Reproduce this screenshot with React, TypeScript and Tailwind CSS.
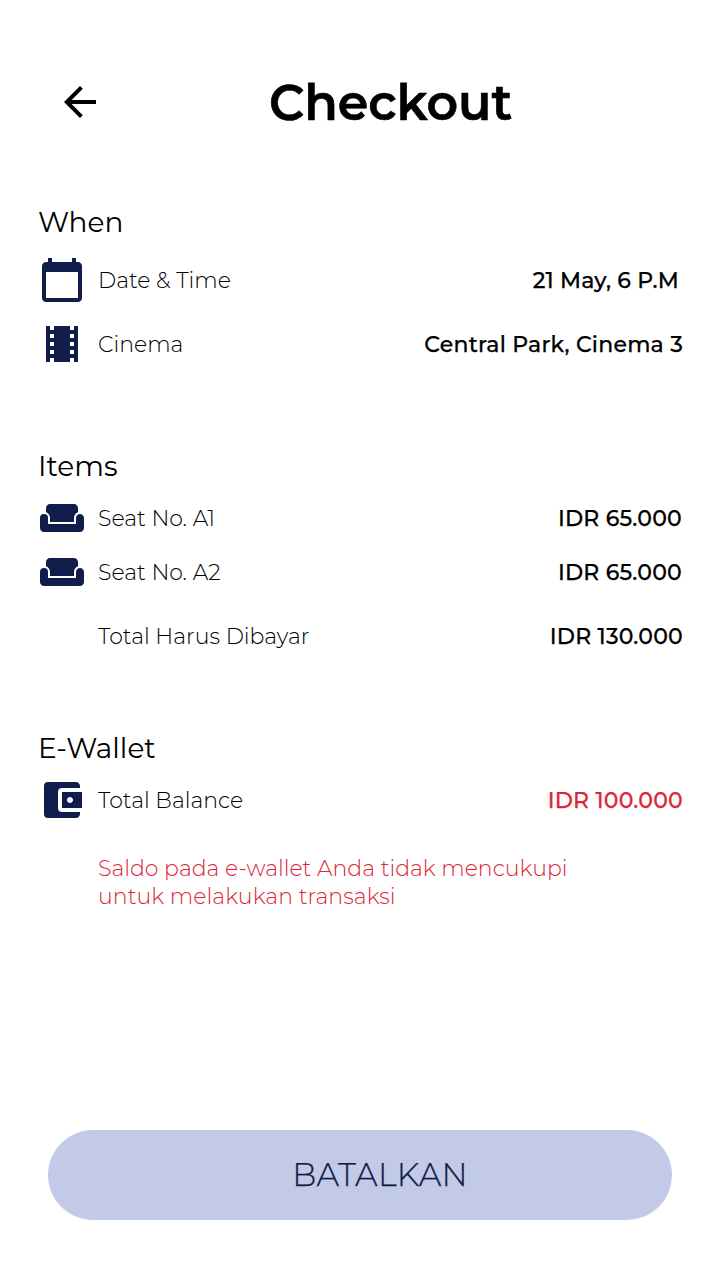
import type { ReactNode } from "react";
import {
  MdAccountBalanceWallet,
  MdArrowBack,
  MdCalendarToday,
  MdTheaters,
  MdWeekend,
} from "react-icons/md";

type RowProps = {
  icon?: ReactNode;
  label: string;
  value: string;
  valueClass?: string;
};

function Row({ icon, label, value, valueClass = "mr-[37px] tracking-[0.22px]" }: RowProps) {
  return (
    <div className="flex h-12 items-center pl-[38px] text-[22px] leading-7">
      <span className="mr-3 size-12 shrink-0 text-[#101d4a]">{icon}</span>
      <span className="pt-0.5 font-light">{label}</span>
      <span className={`ml-auto pt-0.5 font-medium [-webkit-text-stroke:0.25px] ${valueClass}`}>{value}</span>
    </div>
  );
}

function Heading({ children }: { children: ReactNode }) {
  return <h2 className="h-[34px] pl-[38px] text-[28px] leading-[34px] font-normal">{children}</h2>;
}

export default function App() {
  return (
    <main className="flex h-[1280px] w-[720px] flex-col bg-white font-['Montserrat','Inter',sans-serif] whitespace-nowrap text-black">
      <header className="mt-[72px] flex h-[60px] items-center pl-14">
        <button aria-label="Back" className="size-12">
          <MdArrowBack size={48} />
        </button>
        <h1 className="ml-[165px] pt-0.5 text-[49px] leading-[60px] font-semibold [-webkit-text-stroke:0.6px]">
          Checkout
        </h1>
      </header>

      <section className="mt-[73px]">
        <Heading>When</Heading>
        <div className="mt-[17px] flex flex-col gap-4">
          <Row
            icon={<MdCalendarToday size={48} />}
            label="Date & Time"
            value="21 May, 6 P.M"
            valueClass="mr-[41px] tracking-[0.2px]"
          />
          <Row
            icon={<MdTheaters size={48} />}
            label="Cinema"
            value="Central Park, Cinema 3"
            valueClass="mr-[37px] tracking-[0.24px]"
          />
        </div>
      </section>

      <section className="mt-[81px]">
        <Heading>Items</Heading>
        <div className="mt-[11px] flex flex-col gap-1.5">
          <Row
            icon={<MdWeekend size={48} />}
            label="Seat No. A1"
            value="IDR 65.000"
            valueClass="mr-[38px] tracking-[0.22px]"
          />
          <Row
            icon={<MdWeekend size={48} />}
            label="Seat No. A2"
            value="IDR 65.000"
            valueClass="mr-[38px] tracking-[0.22px]"
          />
        </div>
        <div className="mt-4">
          <Row label="Total Harus Dibayar" value="IDR 130.000" />
        </div>
      </section>

      <section className="mt-[71px]">
        <Heading>E-Wallet</Heading>
        <div className="mt-[11px]">
          <Row
            icon={<MdAccountBalanceWallet size={48} />}
            label="Total Balance"
            value="IDR 100.000"
            valueClass="mr-[37px] tracking-[0.22px] text-[#dc2637]"
          />
        </div>
        <p className="mt-[31px] pl-[98px] text-[22px] leading-7 font-light text-[#dc2637]">
          Saldo pada e-wallet Anda tidak mencukupi
          <br />
          <span className="tracking-[0.06px]">untuk melakukan transaksi</span>
        </p>
      </section>

      <button className="mx-12 mt-auto mb-[60px] h-[90px] rounded-full bg-[#c3cae7] pl-10 text-[32px] font-light tracking-[0.2px] text-[#101d4a] [-webkit-text-stroke:0.25px]">
        BATALKAN
      </button>
    </main>
  );
}
